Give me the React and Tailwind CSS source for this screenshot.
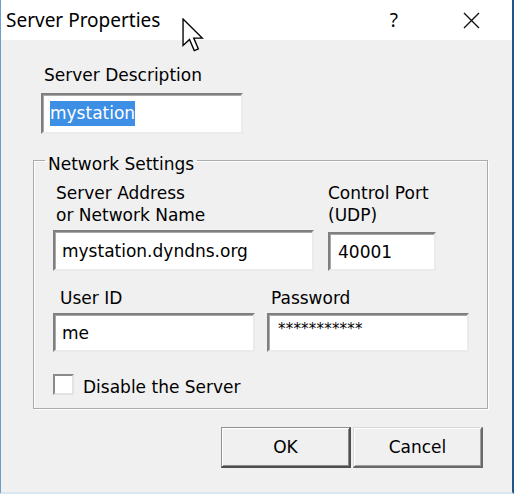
import React from 'react';

function Field({ className = '', children }) {
  return (
    <div
      className={`flex items-center bg-white border-2 border-t-[#7f7f7f] border-l-[#7f7f7f] border-b-[#ebebeb] border-r-[#ebebeb] shadow-[inset_1px_1px_0_#a9a9a9] ${className}`}
    >
      {children}
    </div>
  );
}

function Cursor() {
  return (
    <svg
      className="absolute left-[181px] top-[18px]"
      width="23"
      height="34"
      viewBox="0 0 13.5 20"
    >
      <path
        d="M0.6 0.6 V16.2 L4.4 12.6 L7.2 19.2 L9.6 18.2 L6.9 11.8 L11.9 11.8 Z"
        fill="#fff"
        stroke="#000"
        strokeWidth="0.8"
        strokeLinejoin="miter"
      />
    </svg>
  );
}

export default function App() {
  return (
    <div className="relative w-[514px] h-[494px] flex flex-col overflow-hidden bg-[#f0f0f0] border-l border-l-[#6a9fc9] border-r-2 border-r-[#1f568a] border-b-2 border-b-[#d7e6ef] text-black font-['DejaVu_Sans','Liberation_Sans',sans-serif] text-[17px] leading-[22px]">
      {/* Title bar */}
      <div className="h-[40px] shrink-0 bg-white flex items-center font-['Noto_Sans','Open_Sans',sans-serif] text-[19px] leading-[24px]">
        <span className="ml-[5px]">Server Properties</span>
        <div className="ml-auto mr-[32px] flex items-center">
          <span>?</span>
          <svg className="ml-[65px]" width="17" height="17" viewBox="0 0 17 17">
            <path d="M1 1 L16 16 M16 1 L1 16" stroke="#111" strokeWidth="1.4" />
          </svg>
        </div>
      </div>

      {/* Body */}
      <div className="flex-1 flex flex-col items-start">
        <div className="mt-[24px] ml-[43px]">Server Description</div>
        <Field className="mt-[7px] ml-[40px] w-[202px] h-[41px] pl-[7px]">
          <span className="bg-[#3d8ee5] text-white leading-[25px]">mystation</span>
        </Field>

        <fieldset className="mt-[11px] ml-[32px] w-[455px] h-[264px] border border-[#ababab] shadow-[1px_1px_0_#fff,inset_1px_1px_0_#fff]">
          <legend className="ml-[11px] px-[3px] pt-[8px] leading-[22px]">Network Settings</legend>
          <div className="pl-[19px] flex flex-col">
            {/* Row 1 */}
            <div className="mt-[7px] flex gap-[14px]">
              <div className="w-[261px] flex flex-col">
                <div className="pl-[3px]">
                  Server Address
                  <br />
                  or Network Name
                </div>
                <Field className="mt-[4px] h-[41px] pl-[7px]">mystation.dyndns.org</Field>
              </div>
              <div className="w-[108px] flex flex-col">
                <div>
                  Control Port
                  <br />
                  (UDP)
                </div>
                <Field className="mt-[6px] h-[39px] pl-[8px]">40001</Field>
              </div>
            </div>

            {/* Row 2 */}
            <div className="mt-[16px] flex gap-[12px]">
              <div className="w-[202px] flex flex-col">
                <div className="pl-[7px]">User ID</div>
                <Field className="mt-[4px] h-[39px] pl-[7px]">me</Field>
              </div>
              <div className="w-[202px] flex flex-col">
                <div className="pl-[4px]">Password</div>
                <Field className="mt-[4px] h-[39px] pl-[9px] items-start pt-[3px] text-[15px] tracking-[0.2px]">
                  ***********
                </Field>
              </div>
            </div>

            {/* Checkbox */}
            <div className="mt-[22px] flex items-start gap-[9px]">
              <span className="w-[21px] h-[21px] bg-white border-2 border-t-[#8a8a8a] border-l-[#8a8a8a] border-b-[#e3e3e3] border-r-[#e3e3e3]" />
              <span className="mt-[2px]">Disable the Server</span>
            </div>
          </div>
        </fieldset>

        {/* Buttons */}
        <div className="mt-[18px] self-stretch flex justify-end gap-[2px] pr-[29px]">
          <button className="w-[130px] h-[41px] bg-[#f0f0f0] border-t border-l border-[#8f8f8f] border-b-2 border-r-2 border-b-[#4f4f4f] border-r-[#4f4f4f] shadow-[inset_1px_1px_0_#fff,inset_-1px_-1px_0_#8a8a8a]">
            OK
          </button>
          <button className="w-[130px] h-[41px] bg-[#f0f0f0] border-t border-l border-[#d9d9d9] border-b-2 border-r-2 border-b-[#696969] border-r-[#696969] shadow-[inset_1px_1px_0_#fff,inset_-1px_-1px_0_#a0a0a0]">
            Cancel
          </button>
        </div>
      </div>

      <Cursor />
    </div>
  );
}
